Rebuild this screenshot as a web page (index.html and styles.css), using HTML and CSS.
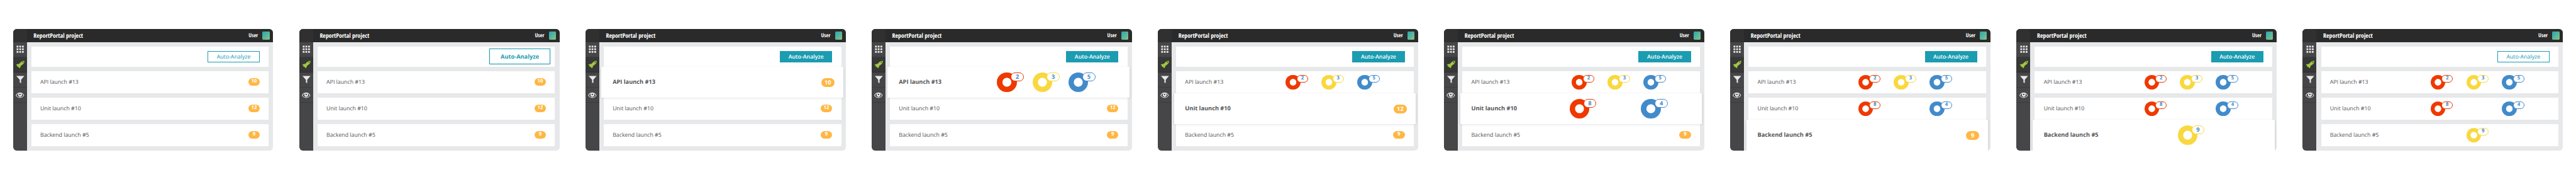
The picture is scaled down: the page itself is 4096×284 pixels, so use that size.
FILE: index.html
```html
<!DOCTYPE html>
<html lang="en">
<head>
<meta charset="utf-8">
<title>ReportPortal project</title>
<link rel="stylesheet" href="styles.css">
</head>
<body>
<main class="strip" id="strip"></main>

<template id="frame">
  <section class="panel">
    <nav class="sidebar">
      <div class="corner"></div>
      <div class="nav-item"><svg class="icon" viewBox="0 0 20 20"><path d="M2 2h4v4H2zM8 2h4v4H8zM14 2h4v4h-4zM2 8h4v4H2zM8 8h4v4H8zM14 8h4v4h-4zM2 14h4v4H2zM8 14h4v4H8zM14 14h4v4h-4z"/></svg></div>
      <div class="nav-item active"><svg class="icon" viewBox="0 0 20 20"><path fill-rule="evenodd" d="M19.3 2C16 1.8 13.5 3 11.5 4.8L7.3 9.3C5 9 2.5 9.6.3 11.2L3.6 12.2C2.8 13.5 3 14.6 4 15.3L7 16.2 7.8 18.8C10.4 17.8 11.3 16 11 13.8L16 10C18.5 8 19.5 5 19.3 2ZM16 3.7A1.3 1.3 0 1 0 16 6.3 1.3 1.3 0 1 0 16 3.7Z"/></svg></div>
      <div class="nav-item"><svg class="icon" viewBox="0 0 20 20"><path d="M1.3 2H19.3L12 10.6V18L9 17V10.6Z"/></svg></div>
      <div class="nav-item"><svg class="icon" viewBox="0 0 20 20"><path fill-rule="evenodd" d="M0 10.2C2.3 6 5.6 4 9.5 4S16.7 6 19 10.2C16.7 14.1 13.4 16 9.5 16S2.3 14.1 0 10.2ZM1.7 10.2C3.5 13.2 6.2 14.7 9.5 14.7S15.5 13.2 17.3 10.2C15.5 7 12.8 5.3 9.5 5.3S3.5 7 1.7 10.2Z"/><path fill-rule="evenodd" d="M9.7 5A4.3 4.3 0 1 0 9.7 13.6 4.3 4.3 0 1 0 9.7 5ZM9.6 6.8A1.8 1.5 0 1 1 9.6 9.8 1.8 1.5 0 1 1 9.6 6.8Z"/></svg></div>
    </nav>
    <div class="main">
      <header class="header">
        <span class="title">ReportPortal project</span>
        <span class="user">User</span>
        <span class="avatar"></span>
      </header>
      <div class="content">
        <div class="toolbar"><span class="button">Auto-Analyze</span></div>
      </div>
    </div>
  </section>
</template>
<script src="script.js"></script>
</body>
</html>
```
FILE: script.js
```js
// Defect counts per launch: product bug, automation bug, system issue.
const launches = [
  { name: "API launch #13", pending: 10, defects: [2, 3, 5] },
  { name: "Unit launch #10", pending: 12, defects: [8, 0, 4] },
  { name: "Backend launch #5", pending: 9, defects: [0, 9, 0] },
];
const kinds = ["red", "yellow", "blue"];

// Steps of the analysis: button state, number of analyzed launches, highlighted launch.
const steps = [
  { button: "idle", done: 0, focus: -1 },
  { button: "hover", done: 0, focus: -1 },
  { button: "busy", done: 0, focus: 0 },
  { button: "busy", done: 1, focus: 0 },
  { button: "busy", done: 1, focus: 1 },
  { button: "busy", done: 2, focus: 1 },
  { button: "busy", done: 2, focus: 2 },
  { button: "busy", done: 3, focus: 2 },
  { button: "idle", done: 3, focus: -1 },
];

function cardHtml(launch, done, focused) {
  const slots = launch.defects.map((count, i) => {
    const ring = done && count
      ? `<span class="ring ${kinds[i]}"><span class="count">${count}</span></span>`
      : "";
    return `<span class="slot">${ring}</span>`;
  }).join("");
  const pending = done ? "" : `<span class="pending">${launch.pending}</span>`;
  return `<div class="card${focused ? " focused" : ""}"><span class="name">${launch.name}</span>${slots}${pending}</div>`;
}

const strip = document.getElementById("strip");
const template = document.getElementById("frame");
for (const step of steps) {
  const frame = template.content.cloneNode(true);
  frame.querySelector(".button").classList.add(step.button);
  frame.querySelector(".content").insertAdjacentHTML("beforeend",
    launches.map((l, i) => cardHtml(l, i < step.done, i === step.focus)).join(""));
  strip.append(frame);
}
```
FILE: styles.css
```css
/* 1rem is ten design pixels */
html { font-size: 7.1111px; }
* { box-sizing: border-box; }
body { margin: 0; background: #fff; overflow: hidden; font-family: "Open Sans", sans-serif; text-rendering: geometricPrecision; }

.strip { display: flex; gap: 5.8rem; padding: 6.4rem 2.9rem 0; }
.panel { display: flex; flex: none; width: 58.2rem; height: 27.2rem; }

.sidebar { width: 3.1rem; background: #464648; border-radius: .8rem 0 0 .8rem; flex: none; }
.corner { height: 3rem; background: #303030; border-radius: .8rem 0 0 0; }
.nav-item { display: flex; align-items: center; justify-content: center; height: 3.39rem; padding-left: .1rem; border-bottom: 1px solid #3b3b3c; }
.nav-item.active { background: #373737; border-color: #2c2c2c; }
.icon { width: 2rem; height: 2rem; fill: #e9e9e9; display: block; }
.active .icon { fill: #a0c83f; }

.main { flex: 1; background: #e7e8ea; border-radius: 0 .8rem .8rem 0; }
.header { display: flex; align-items: center; height: 3rem; padding: 0 .8rem 0 1.5rem; background: #2a2a2a; border-radius: 0 .8rem 0 0; color: #fff; font-family: "Open Sans Condensed", "Open Sans", sans-serif; font-stretch: 75%; font-weight: 700; font-size: 1.4rem; line-height: 3rem; }
.title { flex: 1; }
.user { font-size: 1.22rem; line-height: 2.9rem; margin: 0 1rem .1rem 0; }
.avatar { width: 1.6rem; height: 1.8rem; border-radius: .2rem; background: linear-gradient(135deg, #28a5b9, #86c580); }

.content { display: flex; flex-direction: column; gap: 1rem; padding: 1rem; }
.toolbar { display: flex; align-items: center; justify-content: flex-end; height: 4.5rem; padding-right: 2rem; background: #fff; }
.button { display: flex; align-items: center; justify-content: center; width: 11.7rem; height: 2.5rem; border: 1px solid #1b9cb1; background: #fff; color: #1b9cb1; font-size: 1.24rem; }
.button.hover { width: 13.7rem; height: 3.5rem; margin-right: -1rem; font-weight: 700; font-size: 1.3rem; box-shadow: 0 .2rem .5rem rgba(0, 0, 0, .13); }
.button.busy { background: #1b9cb1; color: #fff; font-weight: 600; }

.card { display: grid; grid-template-columns: 20.15rem 8rem 8rem 8rem 1fr; align-items: center; height: 4.9rem; padding: 0 2rem; background: #fff; }
.card.focused { position: relative; z-index: 1; height: 6.9rem; margin: -1rem -.5rem; padding-left: 2.5rem; box-shadow: 0 .2rem .5rem rgba(60, 75, 85, .22); }
.name { color: #545557; font-size: 1.235rem; line-height: 1.8rem; white-space: nowrap; }
.focused .name { font-weight: 700; font-size: 1.3rem; padding-top: .1rem; }

.pending { justify-self: end; width: 2.6rem; height: 1.7rem; border-radius: .85rem; background: #ffb743; color: #fff; font-weight: 700; font-size: 1.1rem; line-height: 1.6rem; text-align: center; }
.focused .pending { width: 3rem; height: 2rem; margin-top: .1rem; border-radius: 1rem; font-size: 1.3rem; line-height: 2rem; }

.red { --kind: #ee3900; }
.yellow { --kind: #f9d83f; }
.blue { --kind: #428bcb; }
.slot { display: flex; justify-content: center; }
.ring { position: relative; width: 3.3rem; height: 3.3rem; border-radius: 50%; background: radial-gradient(circle closest-side, #fff calc(45.45% - .4px), var(--kind) calc(45.45% + .4px)); }
.count { position: absolute; left: 2.5rem; top: 0; width: 2.5rem; height: 1.7rem; border: 1px solid var(--kind); border-radius: .85rem; background: #fff; color: #428bcb; font-weight: 700; font-size: 1.1rem; line-height: 1.35rem; text-align: center; }
.focused .ring { width: 4.4rem; height: 4.4rem; }
.focused .count { left: 3.1rem; width: 2.9rem; height: 2rem; border-radius: 1rem; font-size: 1.3rem; line-height: 1.7rem; }
```
